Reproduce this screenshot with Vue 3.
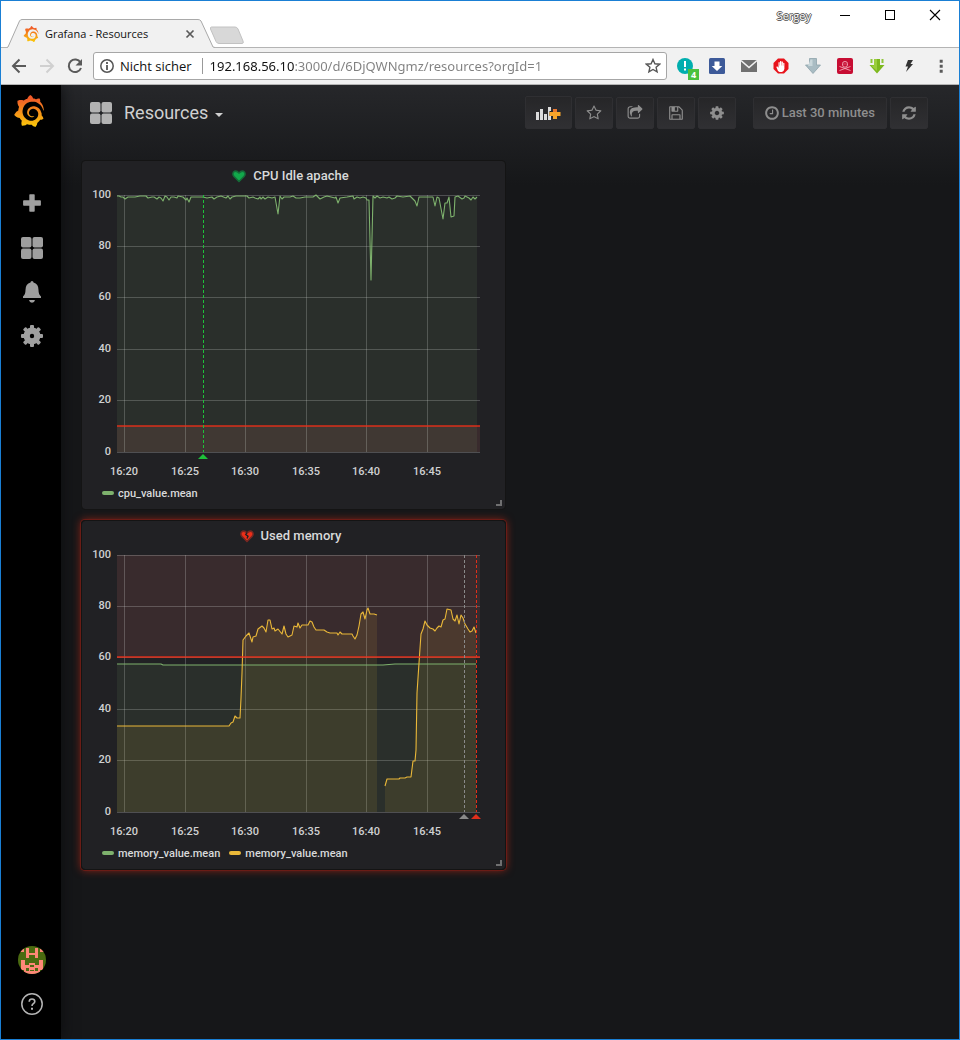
<script setup>
import { ref } from 'vue'

const url = ref('192.168.56.10:3000/d/6DjQWNgmz/resources?orgId=1')

const logo =
  'M23.02 10.59a8.578 8.578 0 0 0-.862-3.034 8.911 8.911 0 0 0-1.789-2.445c.337-1.342-.413-2.505-.413-2.505-1.292-.08-2.113.4-2.416.62-.052-.02-.102-.044-.154-.064-.22-.089-.446-.172-.677-.247-.231-.073-.47-.14-.711-.197a9.867 9.867 0 0 0-.875-.161C14.557.753 12.94 0 12.94 0c-1.804 1.145-2.147 2.744-2.147 2.744l-.018.093c-.098.029-.2.057-.298.088-.138.042-.275.094-.413.143-.138.055-.275.107-.41.166a8.869 8.869 0 0 0-1.557.87l-.063-.029c-2.497-.955-4.716.195-4.716.195-.203 2.658.996 4.33 1.235 4.636a11.608 11.608 0 0 0-.607 2.635C1.636 12.677.953 15.014.953 15.014c1.926 2.214 4.171 2.351 4.171 2.351.003-.002.006-.002.006-.005.285.509.615.994.986 1.446.156.19.32.371.488.548-.704 2.009.099 3.68.099 3.68 2.144.08 3.553-.937 3.849-1.173a9.784 9.784 0 0 0 3.164.501h.08l.055-.003.107-.002.103-.005.003.002c1.01 1.44 2.788 1.646 2.788 1.646 1.264-1.332 1.337-2.653 1.337-2.94v-.058c0-.02-.003-.039-.003-.06.265-.187.52-.387.758-.6a7.875 7.875 0 0 0 1.415-1.7c1.43.083 2.437-.885 2.437-.885-.236-1.49-1.085-2.216-1.264-2.354l-.018-.013-.016-.013a.217.217 0 0 1-.031-.02c.008-.092.016-.18.02-.27.011-.162.016-.323.016-.48v-.253l-.005-.098-.008-.135a1.891 1.891 0 0 0-.01-.13c-.003-.042-.008-.083-.013-.125l-.016-.124-.018-.122a6.215 6.215 0 0 0-2.032-3.73 6.015 6.015 0 0 0-3.222-1.46 6.292 6.292 0 0 0-.85-.048l-.107.002h-.063l-.044.003-.104.008a4.777 4.777 0 0 0-3.335 1.695c-.332.4-.592.84-.768 1.297a4.594 4.594 0 0 0-.312 1.817l.003.091c.005.055.007.11.013.164a3.615 3.615 0 0 0 .698 1.82 3.53 3.53 0 0 0 1.827 1.282c.33.098.66.14.971.137.039 0 .078 0 .114-.002l.063-.003c.02 0 .041-.003.062-.003.034-.002.065-.007.099-.01.007 0 .018-.003.028-.003l.031-.005.06-.008a1.18 1.18 0 0 0 .112-.02c.036-.008.072-.013.109-.024a2.634 2.634 0 0 0 .914-.415c.028-.02.056-.041.085-.065a.248.248 0 0 0 .039-.35.244.244 0 0 0-.309-.06l-.078.042c-.09.044-.184.083-.283.116a2.476 2.476 0 0 1-.475.096c-.028.003-.054.006-.083.006l-.083.002c-.026 0-.054 0-.08-.002l-.102-.006h-.012l-.024.006c-.016-.003-.031-.003-.044-.006-.031-.002-.06-.007-.091-.01a2.59 2.59 0 0 1-.724-.213 2.557 2.557 0 0 1-.667-.438 2.52 2.52 0 0 1-.805-1.475 2.306 2.306 0 0 1-.029-.444l.006-.122v-.023l.002-.031c.003-.021.003-.04.005-.06a3.163 3.163 0 0 1 1.352-2.29 3.12 3.12 0 0 1 .937-.43 2.946 2.946 0 0 1 .776-.101h.06l.07.002.045.003h.026l.07.005a4.041 4.041 0 0 1 1.635.49 3.94 3.94 0 0 1 1.602 1.662 3.77 3.77 0 0 1 .397 1.414l.005.076.003.075c.002.026.002.05.002.075 0 .024.003.052 0 .07v.065l-.002.073-.008.174a6.195 6.195 0 0 1-.08.639 5.1 5.1 0 0 1-.267.927 5.31 5.31 0 0 1-.624 1.13 5.052 5.052 0 0 1-3.237 2.014 4.82 4.82 0 0 1-.649.066l-.039.003h-.287a6.607 6.607 0 0 1-1.716-.265 6.776 6.776 0 0 1-3.4-2.274 6.75 6.75 0 0 1-.746-1.15 6.616 6.616 0 0 1-.714-2.596l-.005-.083-.002-.02v-.056l-.003-.073v-.096l-.003-.104v-.07l.003-.163c.008-.22.026-.45.054-.678a8.707 8.707 0 0 1 .28-1.355c.128-.444.286-.872.473-1.277a7.04 7.04 0 0 1 1.456-2.1 5.925 5.925 0 0 1 .953-.763c.169-.111.343-.213.524-.306.089-.05.182-.091.273-.135.047-.02.093-.042.138-.062a7.177 7.177 0 0 1 .714-.267l.145-.045c.049-.015.098-.026.148-.041.098-.029.197-.052.296-.076.049-.013.1-.02.15-.033l.15-.032.151-.028.076-.013.075-.01.153-.024c.057-.01.114-.013.171-.023l.169-.021c.036-.003.073-.008.106-.01l.073-.008.036-.003.042-.002c.057-.003.114-.008.171-.01l.086-.006h.023l.037-.003.145-.007a7.999 7.999 0 0 1 1.708.125 7.917 7.917 0 0 1 2.048.68 8.253 8.253 0 0 1 1.672 1.09l.09.077.089.078c.06.052.114.107.171.159.057.052.112.106.166.16.052.055.107.107.159.164a8.671 8.671 0 0 1 1.41 1.978c.012.026.028.052.04.078l.04.078.075.156c.023.051.05.1.07.153l.065.15a8.848 8.848 0 0 1 .45 1.34.19.19 0 0 0 .201.142.186.186 0 0 0 .172-.184c.01-.246.002-.532-.024-.856z'

const glyphs = {
  star: 'M1201 1004l306-297-422-62-189-382-189 382-422 62 306 297-73 421 378-199 377 199zm527-357q0 22-26 48l-363 354 86 500q1 7 1 20 0 50-41 50-19 0-40-12l-449-236-449 236q-22 12-40 12-21 0-31.5-14.5t-10.5-35.5q0-6 2-20l86-500-364-354q-25-27-25-48 0-37 56-46l502-73 225-455q19-41 49-41t49 41l225 455 502 73q56 9 56 46z',
  share:
    'M1472 989v259q0 119-84.5 203.5t-203.5 84.5h-832q-119 0-203.5-84.5t-84.5-203.5v-832q0-119 84.5-203.5t203.5-84.5h255q13 0 22.5 9.5t9.5 22.5q0 27-26 32-77 26-133 60-10 4-16 4h-112q-66 0-113 47t-47 113v832q0 66 47 113t113 47h832q66 0 113-47t47-113v-214q0-19 18-28 28-13 54-37 16-16 35-8 21 9 21 29zm237-496l-384 384q-18 19-45 19-12 0-25-5-39-17-39-59v-192h-160q-323 0-438 131-119 137-74 473 3 23-20 34-8 2-12 2-16 0-26-13-10-14-21-31t-39.5-68.5-49.5-99.5-38.5-114-17.5-122q0-49 3.5-91t14-90 28-88 47-81.5 68.5-74 94.5-61.5 124.5-48.5 159.5-30.5 196.5-11h160v-192q0-42 39-59 13-5 25-5 26 0 45 19l384 384q19 19 19 45t-19 45z',
  save: 'M512 1536h768v-384h-768v384zm896 0h128v-896q0-14-10-38.5t-20-34.5l-281-281q-10-10-34-20t-39-10v416q0 40-28 68t-68 28h-576q-40 0-68-28t-28-68v-416h-128v1280h128v-416q0-40 28-68t68-28h832q40 0 68 28t28 68v416zm-384-928v-320q0-13-9.5-22.5t-22.5-9.5h-192q-13 0-22.5 9.5t-9.5 22.5v320q0 13 9.5 22.5t22.5 9.5h192q13 0 22.5-9.5t9.5-22.5zm640 32v928q0 40-28 68t-68 28h-1344q-40 0-68-28t-28-68v-1344q0-40 28-68t68-28h928q40 0 88 20t76 48l280 280q28 28 48 76t20 88z',
  cog: 'M1152 896q0-106-75-181t-181-75-181 75-75 181 75 181 181 75 181-75 75-181zm512-109v222q0 12-8 23t-20 13l-185 28q-19 54-39 91 35 50 107 138 10 12 10 25t-9 23q-27 37-99 108t-94 71q-12 0-26-9l-138-108q-44 23-91 38-16 136-29 186-7 28-36 28h-222q-14 0-24.5-8.5t-11.5-21.5l-28-184q-49-16-90-37l-141 107q-10 9-25 9-14 0-25-11-126-114-165-168-7-10-7-23 0-12 8-23 15-21 51-66.5t54-70.5q-27-50-41-99l-183-27q-13-2-21-12.5t-8-23.5v-222q0-12 8-23t19-13l186-28q14-46 39-92-40-57-107-138-10-12-10-24 0-10 9-23 26-36 98.5-107.5t94.5-71.5q13 0 26 10l138 107q44-23 91-38 16-136 29-186 7-28 36-28h222q14 0 24.5 8.5t11.5 21.5l28 184q49 16 90 37l142-107q9-9 24-9 13 0 25 10 129 119 165 170 7 8 7 22 0 12-8 23-15 21-51 66.5t-54 70.5q26 50 41 98l183 28q13 2 21 12.5t8 23.5z',
  clock:
    'M1024 544v448q0 14-9 23t-23 9h-320q-14 0-23-9t-9-23v-64q0-14 9-23t23-9h224v-352q0-14 9-23t23-9h64q14 0 23 9t9 23zm416 352q0-148-73-273t-198-198-273-73-273 73-198 198-73 273 73 273 198 198 273 73 273-73 198-198 73-273zm224 0q0 209-103 385.5t-279.5 279.5-385.5 103-385.5-103-279.5-279.5-103-385.5 103-385.5 279.5-279.5 385.5-103 385.5 103 279.5 279.5 103 385.5z',
  refresh:
    'M1639 1056q0 5-1 7-64 268-268 434.5t-478 166.5q-146 0-282.5-55t-243.5-157l-129 129q-19 19-45 19t-45-19-19-45v-448q0-26 19-45t45-19h448q26 0 45 19t19 45-19 45l-137 137q71 66 161 102t187 36q134 0 250-65t186-179q11-17 53-117 8-23 30-23h192q13 0 22.5 9.5t9.5 22.5zm25-800v448q0 26-19 45t-45 19h-448q-26 0-45-19t-19-45 19-45l138-138q-148-137-349-137-134 0-250 65t-186 179q-11 17-53 117-8 23-30 23h-199q-13 0-22.5-9.5t-9.5-22.5v-7q65-268 270-434.5t480-166.5q146 0 284 55.5t245 156.5l130-129q19-19 45-19t45 19 19 45z',
}

const actions = [
  { label: 'Mark as favorite', icon: 'star' },
  { label: 'Share dashboard', icon: 'share' },
  { label: 'Save dashboard', icon: 'save' },
  { label: 'Settings', icon: 'cog' },
]

/* Plot area is 363 x 257 units; the value 100 is at y = 0. */
const yTicks = [
  { label: '100', y: 0 },
  { label: '80', y: 51 },
  { label: '60', y: 102 },
  { label: '40', y: 154 },
  { label: '20', y: 205 },
  { label: '0', y: 257 },
]
const xTicks = [
  { label: '16:20', x: 7 },
  { label: '16:25', x: 68 },
  { label: '16:30', x: 128 },
  { label: '16:35', x: 189 },
  { label: '16:40', x: 249 },
  { label: '16:45', x: 310 },
]

const green = '#7eb26d'
const yellow = '#eab839'

const panels = [
  {
    title: 'CPU Idle apache',
    alerting: false,
    band: { y: 231, height: 26 },
    threshold: 231,
    legend: [{ name: 'cpu_value.mean', color: green }],
    series: [
      {
        color: green,
        points:
          '0,1 2,1 4,2 6,2 8,4 11,2 18,2 23,1 29,1 31,3 35,2 37,2 40,4 42,2 44,3 46,6 48,1 50,2 52,5 54,2 57,2 60,3 61,1 66,2 69,5 70,3 72,7 74,2 86,2 90,3 95,2 97,4 100,2 104,1 109,3 111,1 113,4 115,2 119,1 130,1 132,3 136,2 138,3 141,4 143,2 144,4 146,2 148,4 151,2 155,3 158,2 161,19 163,1 165,4 167,2 173,2 176,1 179,3 183,3 188,2 196,2 199,0 203,4 207,2 210,1 214,2 218,3 219,2 221,8 223,3 230,2 236,1 237,4 240,2 243,3 246,2 249,3 250,5 252,5 254,85 256,1 258,3 260,1 263,3 266,2 270,3 272,2 275,4 278,3 280,1 286,2 293,1 298,6 300,11 302,2 308,2 316,2 318,11 320,2 322,3 326,24 328,8 330,8 332,2 334,22 337,21 338,2 341,1 345,4 347,3 348,1 352,3 354,5 356,2 358,4 360,2',
      },
    ],
    markers: [{ x: 86, color: '#1ec13a' }],
  },
  {
    title: 'Used memory',
    alerting: true,
    band: { y: 0, height: 103 },
    threshold: 102,
    legend: [
      { name: 'memory_value.mean', color: green },
      { name: 'memory_value.mean', color: yellow },
    ],
    series: [
      { color: green, points: '0,109 44,109 46,110 256,110 266,110 278,109 310,109 359,109' },
      {
        color: yellow,
        points:
          '0,171 112,171 114,168 116,167 118,161 120,163 123,163 124,143 125,118 126,85 129,81 132,78 135,87 136,82 139,81 141,74 145,71 147,73 149,77 151,65 153,65 155,74 157,73 158,76 161,74 165,79 167,71 169,79 171,82 175,80 177,71 180,72 181,68 183,73 185,70 191,70 193,66 195,67 197,72 199,75 207,75 210,77 213,78 220,78 221,80 223,77 225,79 235,79 236,81 238,84 240,80 242,71 244,59 246,57 248,64 250,55 251,53 253,59 257,59 260,60',
      },
      {
        color: yellow,
        points:
          '268,231 270,224 282,224 283,223 288,223 290,222 294,222 296,206 298,206 299,195 300,138 302,108 304,79 306,74 308,66 310,70 313,73 316,74 318,76 320,73 322,71 324,72 326,65 328,64 330,54 334,55 336,64 338,66 340,60 342,69 344,60 346,63 348,69 351,74 353,77 355,76 357,72 359,78',
      },
    ],
    markers: [
      { x: 347, color: '#8a8a8a' },
      { x: 359, color: '#e02f1b' },
    ],
  },
]

function area(points) {
  const list = points.split(' ')
  const first = list[0].split(',')[0]
  const last = list[list.length - 1].split(',')[0]
  return `${first},257 ${points} ${last},257`
}
</script>

<template>
  <div class="window">
    <header class="titlebar">
      <div class="tabs">
        <div class="tab">
          <svg class="tab-shape" viewBox="0 0 208 29" aria-hidden="true">
            <path d="M0 28.500 L1 28 L12.500 2 Q13.300 .5 15 .5 H191 Q193 .5 194 2 L206 28 L208 28.500 V29 H0Z" fill="#f1f1f1" />
            <path d="M0 28.500 L1 28 L12.500 2 Q13.300 .5 15 .5 H191 Q193 .5 194 2 L206 28 L208 28.500" fill="none" stroke="#a9a9a9" />
          </svg>
          <svg class="favicon" viewBox="0 0 24 24" aria-hidden="true">
            <defs>
              <linearGradient id="flame" x1="0" y1="0" x2="0" y2="1">
                <stop offset="0.1" stop-color="#f05a28" />
                <stop offset="1" stop-color="#fbca0a" />
              </linearGradient>
            </defs>
            <path :d="logo" fill="url(#flame)" />
          </svg>
          <span class="tab-title">Grafana - Resources</span>
          <button class="tab-close" aria-label="Close tab">
            <svg viewBox="0 0 10 10"><path d="M1.500 1.500l7 7M8.500 1.500l-7 7" stroke="#5a5a5a" stroke-width="1.700" /></svg>
          </button>
        </div>
        <button class="new-tab" aria-label="New tab">
          <svg viewBox="0 0 36 19"><path d="M2.500 1H26q2 0 3 2l5 12q1 2.500-1 2.500H10q-2 0-3-2L1.500 3Q1 1 2.500 1z" fill="#d8d8d8" stroke="#c2c2c2" /></svg>
        </button>
      </div>
      <div class="window-controls">
        <button class="user">Sergey</button>
        <button class="control" aria-label="Minimize"><svg viewBox="0 0 12 12"><path d="M1 6.500h10" stroke="#000" /></svg></button>
        <button class="control" aria-label="Maximize"><svg viewBox="0 0 12 12"><rect x="1.500" y="1.500" width="9" height="9" fill="none" stroke="#000" /></svg></button>
        <button class="control" aria-label="Close"><svg viewBox="0 0 12 12"><path d="M1 1l10 10M11 1L1 11" stroke="#000" stroke-width="1.100" /></svg></button>
      </div>
    </header>

    <div class="toolbar">
      <button class="nav-button" aria-label="Back">
        <svg viewBox="0 0 16 16"><path d="M15 8H2.500M8.500 1.500L2 8l6.500 6.500" fill="none" stroke="#5a5a5a" stroke-width="2" /></svg>
      </button>
      <button class="nav-button" aria-label="Forward">
        <svg viewBox="0 0 16 16"><path d="M1 8h12.500M7.500 1.500L14 8l-6.500 6.500" fill="none" stroke="#d0d0d0" stroke-width="2" /></svg>
      </button>
      <button class="nav-button" aria-label="Reload">
        <svg viewBox="0 0 16 16">
          <path d="M13.500 4.500A6.300 6.300 0 1 0 14 10" fill="none" stroke="#5a5a5a" stroke-width="2" />
          <path d="M15 1v6.500H8.500z" fill="#5a5a5a" />
        </svg>
      </button>
      <div class="address">
        <button class="security" aria-label="Site information">
          <svg viewBox="0 0 14 14">
            <circle cx="7" cy="7" r="6.200" fill="none" stroke="#555" stroke-width="1.500" />
            <path d="M7 3v2M7 6v5" stroke="#555" stroke-width="1.800" />
          </svg>
          <span>Nicht sicher</span>
        </button>
        <input v-model="url" class="url" type="text" aria-label="Address" />
        <button class="bookmark" aria-label="Bookmark">
          <svg viewBox="0 0 16 16"><path d="M8 1.500l1.900 4.300 4.700.4-3.500 3.100 1 4.600L8 11.500l-4.100 2.400 1-4.600-3.500-3.100 4.700-.4z" fill="none" stroke="#555" stroke-width="1.400" /></svg>
        </button>
      </div>
      <div class="extensions">
        <button class="extension" aria-label="Tracker alerts">
          <svg viewBox="0 0 16 16"><circle cx="8" cy="8" r="8" fill="#00aeae" /><path d="M8 3v6M8 10.500v2" stroke="#fff" stroke-width="2" /></svg>
          <span class="badge">4</span>
        </button>
        <button class="extension" aria-label="Downloader">
          <svg viewBox="0 0 16 16"><rect width="16" height="16" rx="1.500" fill="#3d5a99" /><path d="M5.500 3.500h5V8h2.800L8 13 2.700 8h2.800z" fill="#fff" /></svg>
        </button>
        <button class="extension" aria-label="Mail">
          <svg viewBox="0 0 16 16"><path d="M0 2h16v12H0z" fill="#707070" /><path d="M0 2.500l8 7 8-7" fill="none" stroke="#f1f1f1" stroke-width="1.600" /></svg>
        </button>
        <button class="extension" aria-label="Ad blocker">
          <svg viewBox="0 0 16 16">
            <path d="M5 .5h6L15.500 5v6L11 15.500H5L.5 11V5z" fill="#e8131b" />
            <path d="M5 13L3.300 9l.9-.8 1.300 1.600V4.500q.6-.8 1.200 0v3h.3V3.300q.7-.8 1.300 0v4.200h.3V3.800q.7-.8 1.300 0v4h.3V5q.7-.6 1.200.2V11q-.5 2.500-2.500 3H6.500z" fill="#fff" />
          </svg>
        </button>
        <button class="extension" aria-label="Download all">
          <svg viewBox="0 0 16 16"><path d="M4.500.5h7V7h4L8 15.500.5 7h4z" fill="#a9bcc3" stroke="#8ea3ab" stroke-width=".8" /><path d="M5.500 1.500h2V8H3z" fill="#c9d7db" /></svg>
        </button>
        <button class="extension" aria-label="Skull">
          <svg viewBox="0 0 16 16">
            <rect width="16" height="16" rx="2" fill="#c70d33" />
            <path d="M5.500 7V5.500q0-2 2.500-2t2.500 2V7L9.500 9h-3zM2.500 8.500l11 4M13.500 8.500l-11 4M7 5.500v1M9 5.500v1" fill="none" stroke="#f3a9b8" stroke-width=".9" />
          </svg>
        </button>
        <button class="extension" aria-label="Save from net">
          <svg viewBox="0 0 16 16"><path d="M5 1h6v6h4.500L8 15.500.5 7H5z" fill="#7db81e" /><path d="M1.500 1h2v4h-2zM12.500 1h2v4h-2z" fill="#8fc63a" /><path d="M5 1h3v12L2 7.500h3z" fill="#9bce3c" /></svg>
        </button>
        <button class="extension" aria-label="Power">
          <svg viewBox="0 0 16 16"><path d="M7 2h5L9.500 6H12l-7 8 2-5.500H4.500z" fill="#333" /></svg>
        </button>
        <button class="extension" aria-label="Menu">
          <svg viewBox="0 0 16 16"><path d="M6.700 1.700h3v3h-3zM6.700 6.700h3v3h-3zM6.700 11.700h3v3h-3z" fill="#5a5a5a" /></svg>
        </button>
      </div>
    </div>

    <div class="app">
      <aside class="sidebar">
        <a href="#" class="brand" aria-label="Home">
          <svg viewBox="0 0 24 24"><path :d="logo" fill="url(#flame)" /></svg>
        </a>
        <nav class="side-nav">
          <a href="#" class="side-link" aria-label="Create">
            <svg viewBox="0 0 22 22"><path d="M9 1.200h4q.7 0 .7.700v5.400h5.400q.8 0 .8.700v4q0 .7-.8.700h-5.400v5.400q0 .7-.7.700H9q-.7 0-.7-.7v-5.400H2.900q-.8 0-.8-.7V8q0-.7.800-.7h5.400V1.900q0-.7.700-.7z" fill="#9f9f9f" /></svg>
          </a>
          <a href="#" class="side-link" aria-label="Dashboards">
            <svg viewBox="0 0 22 22"><g fill="#9f9f9f"><rect width="10.500" height="10.500" rx="2" /><rect x="11.500" width="10.500" height="10.500" rx="2" /><rect y="11.500" width="10.500" height="10.500" rx="2" /><rect x="11.500" y="11.500" width="10.500" height="10.500" rx="2" /></g></svg>
          </a>
          <a href="#" class="side-link" aria-label="Alerting">
            <svg viewBox="0 0 22 22"><path d="M11 0q1.500 0 1.500 1.600 5 1.400 5 7.400 0 4.500 2.500 6.500v1.500H2v-1.500q2.500-2 2.500-6.500 0-6 5-7.400Q9.500 0 11 0zM8 19h6q-.5 2.700-3 2.700T8 19z" fill="#9f9f9f" /></svg>
          </a>
          <a href="#" class="side-link" aria-label="Configuration">
            <svg viewBox="0 0 22 22">
              <g fill="#9f9f9f">
                <rect v-for="n in 8" :key="n" x="9" y="0" width="4" height="5" rx="1" :transform="`rotate(${n * 45} 11 11)`" />
              </g>
              <circle cx="11" cy="11" r="5.300" fill="none" stroke="#9f9f9f" stroke-width="6.200" />
            </svg>
          </a>
        </nav>
        <div class="side-bottom">
          <a href="#" class="side-link" aria-label="Profile">
            <svg class="avatar" viewBox="0 0 28 28">
              <defs><clipPath id="round"><circle cx="14" cy="14" r="14" /></clipPath></defs>
              <g clip-path="url(#round)">
                <path d="M0 0h28v28H0z" fill="#4a6a10" />
                <path d="M8 2h3v5h6V2h3v10h-3V9h-6v3H8zM1 3h5v3H1zM22 3h5v3h-5z" fill="#fd8877" />
                <path d="M3 14h4v5h4v-2h6v2h4v-5h4v10h-3v4H6v-4H3z" fill="#fd8877" />
                <path d="M12 19h4v2h-4zM8 22h3v3H8zM17 22h3v3h-3zM12 24h4v1h-4z" fill="#4a6a10" />
              </g>
            </svg>
          </a>
          <a href="#" class="side-link" aria-label="Help">
            <svg viewBox="0 0 22 22"><circle cx="11" cy="11" r="10.200" fill="none" stroke="#b5b5b5" stroke-width="1.500" /><path d="M8.200 8.700Q8.300 6 11 6t2.800 2.400q0 1.300-1.400 2.300T11 13" fill="none" stroke="#b5b5b5" stroke-width="1.600" /><path d="M10 14.800h2v2h-2z" fill="#b5b5b5" /></svg>
          </a>
        </div>
      </aside>

      <main class="main">
        <div class="dash-bar">
          <button class="dash-title">
            <svg viewBox="0 0 22 22" aria-hidden="true"><g fill="#b3b3b3"><rect width="10.500" height="10.500" rx="2" /><rect x="11.500" width="10.500" height="10.500" rx="2" /><rect y="11.500" width="10.500" height="10.500" rx="2" /><rect x="11.500" y="11.500" width="10.500" height="10.500" rx="2" /></g></svg>
            <span>Resources</span>
            <i class="caret"></i>
          </button>
          <div class="dash-actions">
            <button class="tool add" aria-label="Add panel">
              <svg viewBox="0 0 26 16"><g fill="#dcdcdc"><path d="M1 7h3v8H1zM5 4h3v11H5zM9 9h3v6H9zM13 2h3v13h-3z" /></g><path d="M17 6h-2.500v5H17v2h4.500" fill="#222326" /><path d="M18 4h4v3h3.500v4H22v3h-4v-3h-3.500V7H18z" fill="#f7a52a" /><path d="M18 4h4v3h-4z" fill="#e8772e" /></svg>
            </button>
            <button v-for="a in actions" :key="a.icon" class="tool" :aria-label="a.label">
              <svg viewBox="0 0 1792 1792"><path :d="glyphs[a.icon]" /></svg>
            </button>
            <button class="tool time">
              <svg viewBox="0 0 1792 1792" aria-hidden="true"><path :d="glyphs.clock" /></svg>
              <span>Last 30 minutes</span>
            </button>
            <button class="tool" aria-label="Refresh">
              <svg viewBox="0 0 1792 1792"><path :d="glyphs.refresh" /></svg>
            </button>
          </div>
        </div>

        <div class="grid">
          <section v-for="p in panels" :key="p.title" class="panel" :class="{ alerting: p.alerting }">
            <h2 class="panel-title">
              <svg viewBox="0 0 16 14" aria-hidden="true">
                <path
                  d="M8 12.500L3 7.500Q1 5 2.600 3 5 .8 8 4q3-3.200 5.400-1Q15 5 13 7.500z"
                  :fill="p.alerting ? '#ed2e18' : '#12a84b'"
                  :stroke="p.alerting ? '#7a2822' : '#156b38'"
                  stroke-width="1.500"
                />
                <path v-if="p.alerting" d="M8 3.500l-1.200 2 2.200 1.700L8 9.500" fill="none" stroke="#212124" stroke-width="1.400" />
              </svg>
              <span>{{ p.title }}</span>
            </h2>
            <svg class="chart" viewBox="0 0 423 290" role="img" :aria-label="p.title">
              <g transform="translate(35 5)">
                <rect x="0" :y="p.band.y" width="363" :height="p.band.height" fill="#ea7070" fill-opacity=".12" />
                <g fill="#c8c8c8" fill-opacity=".28">
                  <rect v-for="t in yTicks" :key="t.label" x="0" :y="t.y" width="363" height="1" />
                  <rect v-for="t in xTicks" :key="t.label" :x="t.x" y="0" width="1" height="257" />
                </g>
                <polygon v-for="(s, i) in p.series" :key="'a' + i" :points="area(s.points)" :fill="s.color" fill-opacity=".1" />
                <polyline v-for="(s, i) in p.series" :key="'l' + i" :points="s.points" fill="none" :stroke="s.color" stroke-width="1.100" stroke-linejoin="round" />
                <rect x="0" :y="p.threshold - 1" width="363" height="2" fill="#ed2e18" fill-opacity=".68" />
                <g v-for="m in p.markers" :key="m.x">
                  <path :d="`M${m.x + 0.5} 0V257`" :stroke="m.color" stroke-dasharray="3 2" />
                  <path :d="`M${m.x} 259l5 5h-10z`" :fill="m.color" />
                </g>
                <g class="tick">
                  <text v-for="t in yTicks" :key="t.label" x="-6" :y="t.y + 3" text-anchor="end">{{ t.label }}</text>
                  <text v-for="t in xTicks" :key="t.label" :x="t.x" y="280" text-anchor="middle">{{ t.label }}</text>
                </g>
              </g>
            </svg>
            <div class="legend">
              <button v-for="(l, i) in p.legend" :key="i" class="legend-item">
                <i class="swatch" :style="{ background: l.color }"></i>{{ l.name }}
              </button>
            </div>
            <i class="resize"></i>
          </section>
        </div>
      </main>
    </div>
  </div>
</template>

<style>
body {
  background: #161719;
}
</style>

<style scoped>
* {
  box-sizing: border-box;
}
button {
  margin: 0;
  padding: 0;
  border: 0;
  background: none;
  font: inherit;
  color: inherit;
}
svg {
  display: block;
  flex: none;
}
.window {
  display: flex;
  flex-direction: column;
  min-height: 100vh;
  border: 1px solid #1a7fd4;
  font-family: "Open Sans", "Noto Sans", sans-serif;
  font-size: 12px;
}
.titlebar {
  display: flex;
  justify-content: space-between;
  height: 47px;
  background: #fff;
  border-bottom: 1px solid #b4b4b4;
}
.tabs {
  display: flex;
  align-items: flex-end;
}
.tab {
  position: relative;
  display: flex;
  align-items: center;
  width: 208px;
  height: 29px;
  margin: 0 0 -1px 6px;
  padding: 0 20px 0 16px;
}
.tab-shape {
  position: absolute;
  inset: 0;
  width: 208px;
  height: 29px;
}
.favicon {
  position: relative;
  width: 16px;
  height: 16px;
}
.tab-title {
  position: relative;
  flex: 1;
  margin-left: 6px;
  font-size: 11px;
  color: #111;
  white-space: nowrap;
}
.tab-close {
  position: relative;
}
.tab-close svg {
  width: 10px;
  height: 10px;
}
.new-tab {
  margin: 0 0 2px -6px;
}
.new-tab svg {
  width: 36px;
  height: 19px;
}
.window-controls {
  display: flex;
  align-items: center;
  height: 28px;
  padding-right: 2px;
}
.user {
  margin-right: 11px;
  font-size: 11px;
  color: #fff;
  text-shadow: 1px 0 #555, -1px 0 #555, 0 1px #555, 0 -1px #555;
}
.control {
  display: flex;
  justify-content: center;
  width: 45px;
}
.control svg {
  width: 12px;
  height: 12px;
}
.toolbar {
  display: flex;
  align-items: center;
  height: 37px;
  padding: 0 10px;
  background: #f1f1f1;
  border-bottom: 1px solid #b4b4b4;
}
.nav-button {
  width: 28px;
}
.nav-button svg {
  width: 16px;
  height: 16px;
}
.address {
  display: flex;
  flex: 1;
  align-items: center;
  height: 28px;
  margin-left: -2px;
  padding: 0 5px 0 6px;
  background: #fff;
  border: 1px solid #a6a6a6;
  border-radius: 3px;
  font-size: 13px;
}
.security {
  display: flex;
  align-items: center;
  gap: 6px;
  padding-right: 10px;
  border-right: 1px solid #999;
  line-height: 16px;
  color: #111;
  white-space: nowrap;
}
.security svg {
  width: 14px;
  height: 14px;
}
.url {
  flex: 1;
  min-width: 0;
  height: 20px;
  margin-left: 7px;
  padding: 0;
  border: 0;
  outline: 0;
  font-family: "Noto Sans", "Open Sans", sans-serif;
  font-size: 13px;
  color: transparent;
  background: linear-gradient(90deg, #111 84px, #808080 84px);
  -webkit-background-clip: text;
  background-clip: text;
}
.bookmark svg {
  width: 16px;
  height: 16px;
}
.extensions {
  display: flex;
  gap: 16px;
  margin-left: 10px;
}
.extension {
  position: relative;
}
.extension svg {
  width: 16px;
  height: 16px;
}
.badge {
  position: absolute;
  left: 11px;
  top: 11px;
  width: 11px;
  height: 11px;
  background: #4bc13e;
  font-size: 9px;
  font-weight: 700;
  line-height: 11px;
  color: #fff;
}
.app {
  display: flex;
  flex: 1;
  overflow: hidden;
  font-family: Roboto, sans-serif;
}
.sidebar {
  position: relative;
  display: flex;
  flex-direction: column;
  width: 60px;
  background: #000;
  box-shadow: 0 0 14px #0b0c0e;
}
.brand {
  height: 97px;
  padding: 10px 0 0 12px;
}
.brand svg {
  width: 32px;
  height: 32px;
}
.side-nav {
  flex: 1;
}
.side-link {
  display: flex;
  align-items: center;
  justify-content: center;
  height: 44px;
  padding-left: 2px;
}
.side-link svg {
  width: 22px;
  height: 22px;
}
.side-link .avatar {
  width: 28px;
  height: 28px;
}
.side-bottom {
  padding-bottom: 13px;
}
.main {
  flex: 1;
  min-width: 0;
  padding: 0 31px 0 21px;
  background: linear-gradient(#26272a, #161719 100px);
}
.dash-bar {
  display: flex;
  align-items: center;
  justify-content: space-between;
  height: 55px;
  padding-left: 8px;
}
.dash-title {
  display: flex;
  align-items: center;
  gap: 12px;
  font-size: 18px;
  line-height: 22px;
  color: #d0d0d0;
}
.dash-title svg {
  width: 22px;
  height: 22px;
}
.caret {
  margin: 4px 0 0 -5px;
  border: 4px solid transparent;
  border-top-color: #d0d0d0;
  border-bottom: 0;
}
.dash-actions {
  display: flex;
  align-items: center;
  gap: 3px;
}
.tool {
  display: flex;
  align-items: center;
  justify-content: center;
  width: 38px;
  height: 32px;
  background: linear-gradient(#262628, #303033);
  border: 1px solid #2f2f32;
  border-radius: 2px;
  font-size: 13px;
  font-weight: 500;
  color: #8e8e8e;
}
.tool svg {
  width: 16px;
  height: 16px;
  fill: #8e8e8e;
}
.tool.add {
  width: 47px;
  height: 33px;
}
.tool.add svg {
  width: 26px;
}
.tool.time {
  gap: 2px;
  width: auto;
  margin-left: 14px;
  padding: 0 11px 0 10px;
  white-space: nowrap;
}
.grid {
  display: grid;
  grid-template-columns: 1fr;
  gap: 12px;
  width: 50%;
  padding-top: 21px;
}
.panel {
  position: relative;
  padding-bottom: 3px;
  background: #212124;
  border-radius: 3px;
  outline: 1px solid #141414;
}
.panel.alerting {
  box-shadow: 0 0 0 1px #141414, 0 0 0 2px #6a1c16, 0 0 9px 1px rgba(237, 46, 24, 0.6);
}
.panel-title {
  display: flex;
  align-items: center;
  justify-content: center;
  gap: 6px;
  height: 29px;
  margin: 0;
  padding-right: 7px;
  font-size: 13px;
  font-weight: 500;
  color: #d8d9da;
}
.panel-title svg {
  width: 16px;
  height: 14px;
}
.chart {
  width: 100%;
  height: auto;
  overflow: visible;
}
.tick {
  fill: #d0d1d2;
  font-size: 11px;
  font-weight: 500;
}
.legend {
  display: flex;
  gap: 9px;
  height: 26px;
  padding-left: 20px;
}
.legend-item {
  display: flex;
  align-items: center;
  gap: 4px;
  font-size: 11px;
  font-weight: 500;
  color: #d8d9da;
}
.swatch {
  width: 12px;
  height: 4px;
  border-radius: 2px;
}
.resize {
  position: absolute;
  right: 3px;
  bottom: 3px;
  width: 6px;
  height: 6px;
  border: solid #6f6f70;
  border-width: 0 2px 2px 0;
}
</style>
